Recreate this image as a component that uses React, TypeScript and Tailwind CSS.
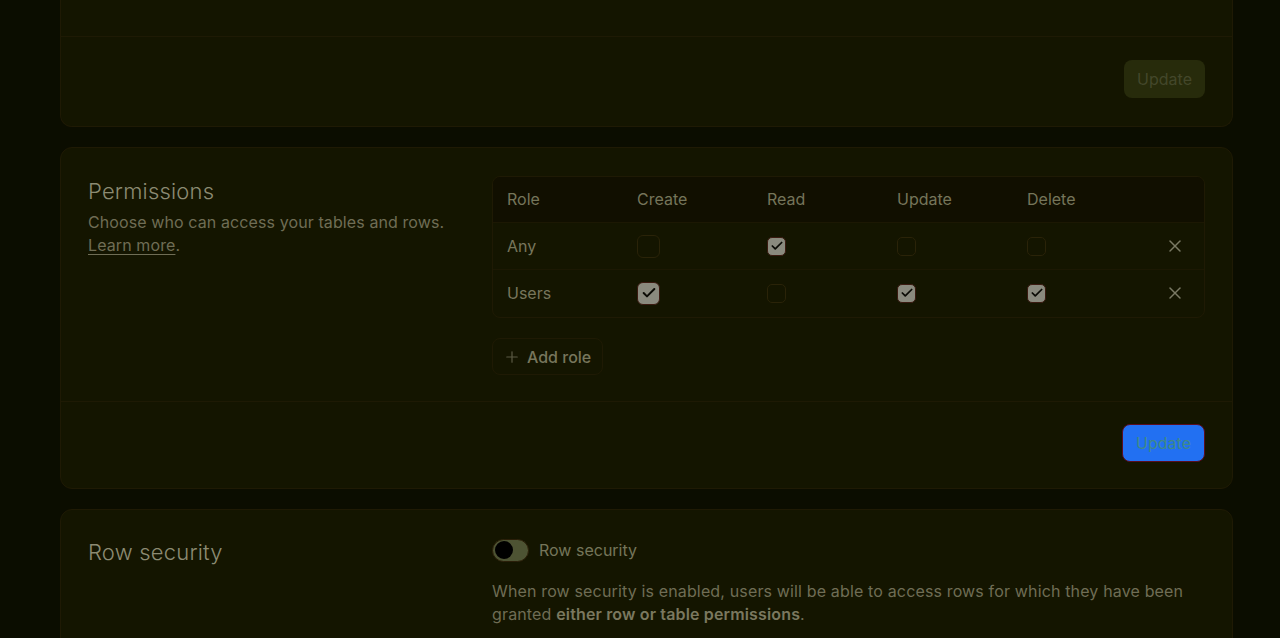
import { X, Plus, Check } from 'lucide-react'

type Perm = { role: string; create: boolean; read: boolean; update: boolean; del: boolean }

const rows: Perm[] = [
  { role: 'Any', create: false, read: true, update: false, del: false },
  { role: 'Users', create: true, read: false, update: true, del: true },
]

function Box({ checked, big }: { checked: boolean; big?: boolean }) {
  const size = big ? 'w-[23px] h-[23px] rounded-[6px]' : 'w-[19px] h-[19px] rounded-[5px]'
  if (checked) {
    return (
      <span className={`${size} flex items-center justify-center bg-[#8a8a7e] border border-[#3a1a10]`}>
        <Check className={big ? 'w-4 h-4' : 'w-3.5 h-3.5'} strokeWidth={3} color="#0b0b05" />
      </span>
    )
  }
  return <span className={`${size} block border border-[#2a2308]`} />
}

function Card({ children, clipped }: { children: React.ReactNode; clipped?: boolean }) {
  return (
    <div
      className={
        clipped
          ? 'bg-[#141500] border border-t-0 border-[#1f1a04] rounded-b-xl'
          : 'bg-[#141500] border border-[#1f1a04] rounded-xl'
      }
    >
      {children}
    </div>
  )
}

export default function App() {
  return (
    <div className="bg-[#0b0d00] font-['Inter',sans-serif] overflow-hidden h-[638px]">
      <div className="ml-[60px] w-[1173px] flex flex-col gap-5">
        <Card clipped>
          <div className="h-[37px] border-b border-[#1e1a04]" />
          <div className="flex justify-end px-[27px] pt-[23px] pb-[28px]">
            <button className="h-[38px] px-[13px] rounded-lg bg-[#272b0b] text-[#43472a] text-base">Update</button>
          </div>
        </Card>

        <Card>
          <div className="flex px-[27px] pt-7 pb-[26px] border-b border-[#1e1a04]">
            <div className="w-[404px] shrink-0 pt-[1px]">
              <h2 className="text-[22px] leading-[28px] text-[#8c8b73] font-light tracking-[0.2px]">Permissions</h2>
              <p className="text-base leading-[23px] text-[#6f6d55] mt-[6px] tracking-[0.1px]">
                Choose who can access your tables and rows.
                <br />
                <span className="underline underline-offset-[3px] decoration-[#6f6d55]">Learn more</span>.
              </p>
            </div>
            <div className="flex-1">
              <div className="rounded-lg border border-[#1f1a04] overflow-hidden">
                <div className="flex items-center h-[46px] pb-[2px] bg-[#110f00] border-b border-[#1c1803] px-[14px] text-base text-[#75755a]">
                  <div className="w-[130px]">Role</div>
                  <div className="w-[130px]">Create</div>
                  <div className="w-[130px]">Read</div>
                  <div className="w-[130px]">Update</div>
                  <div className="w-[130px]">Delete</div>
                </div>
                {rows.map((r, i) => (
                  <div
                    key={r.role}
                    className={`flex items-center h-[47px] px-[14px] text-base text-[#77765c] ${i === 0 ? 'border-b border-[#1c1803]' : 'pb-[1px]'}`}
                  >
                    <div className="w-[130px]">{r.role}</div>
                    <div className="w-[130px]"><Box checked={r.create} big /></div>
                    <div className="w-[130px]"><Box checked={r.read} /></div>
                    <div className="w-[130px]"><Box checked={r.update} /></div>
                    <div className="w-[130px]"><Box checked={r.del} /></div>
                    <div className="flex-1 flex justify-end pr-[5px]">
                      <X className="w-5 h-5" color="#7a7a64" strokeWidth={1.8} />
                    </div>
                  </div>
                ))}
              </div>
              <button className="mt-5 h-[37px] pl-[10px] pr-[11px] flex items-center gap-[6px] rounded-lg border border-[#1f1a04] text-base font-medium text-[#77765c]">
                <Plus className="w-[18px] h-[18px]" color="#5b5a44" strokeWidth={1.6} />
                Add role
              </button>
            </div>
          </div>
          <div className="flex justify-end px-[27px] pt-[22px] pb-[26px]">
            <button className="h-[38px] px-[13px] rounded-lg bg-[#2270f2] border border-[#5a0c20] text-[#3f8a86] text-base">Update</button>
          </div>
        </Card>

        <Card>
          <div className="flex px-[27px] pt-[28px] pb-10">
            <div className="w-[404px] shrink-0">
              <h2 className="text-[22px] leading-[28px] text-[#8c8b73] font-light tracking-[0.2px]">Row security</h2>
            </div>
            <div className="flex-1">
              <div className="flex items-center gap-[10px]">
                <span className="w-[37px] h-[23px] rounded-full bg-[#4d5333] border border-[#2a1e08] flex items-center px-[2px]">
                  <span className="w-[18px] h-[18px] rounded-full bg-black" />
                </span>
                <span className="text-base text-[#75755a]">Row security</span>
              </div>
              <p className="mt-[18px] text-base leading-[23px] text-[#6f6d55] tracking-[0.15px]">
                When row security is enabled, users will be able to access rows for which they have been
                <br />
                granted <span className="font-semibold text-[#7a785f]">either row or table permissions</span>.
              </p>
            </div>
          </div>
        </Card>
      </div>
    </div>
  )
}
